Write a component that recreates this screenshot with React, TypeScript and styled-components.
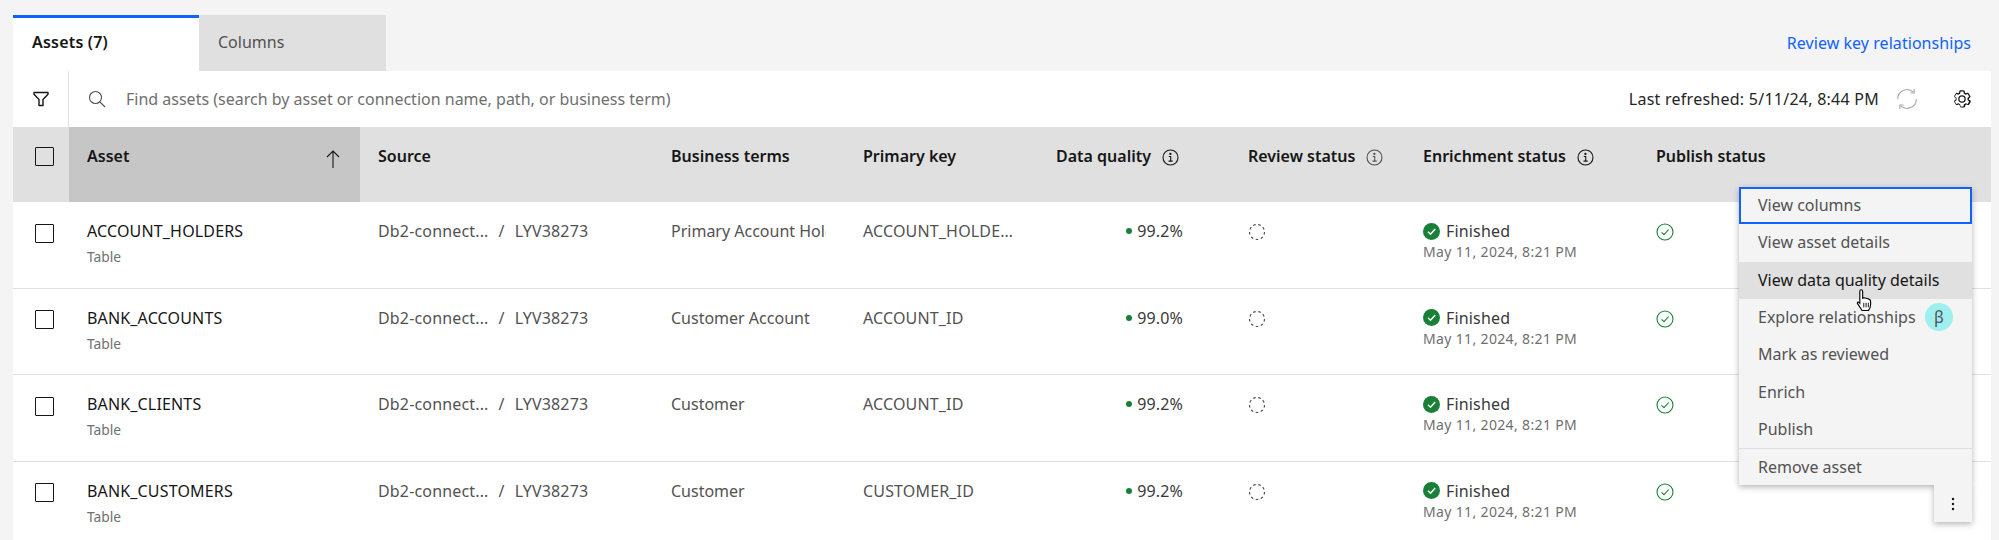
import React from 'react';
import styled, { createGlobalStyle } from 'styled-components';

const COLUMNS = '56px 291px 293px 192px 193px 192px 175px 233px 1fr';

const GlobalStyle = createGlobalStyle`
  html, body {
    margin: 0;
    padding: 0;
    background: #f4f4f4;
    overflow: hidden;
  }

  body {
    font-family: "Noto Sans", "Liberation Sans", sans-serif;
    font-size: 16px;
    color: #161616;
  }
`;

const Page = styled.div`
  position: relative;
  width: 1999px;
  height: 540px;
  padding: 15px 8px 0 13px;
  box-sizing: border-box;
  overflow: hidden;
`;

const TabBar = styled.div`
  display: flex;
  align-items: stretch;
  height: 56px;
`;

type TabProps = { $active?: boolean };

const Tab = styled.div<TabProps>`
  width: ${props => props.$active ? '186px' : '187px'};
  box-sizing: border-box;
  padding: 0 19px 5px;
  display: flex;
  align-items: center;
  background: ${props => props.$active ? '#fff' : '#e0e0e0'};
  border-top: 3px solid ${props => props.$active ? '#0f62fe' : '#e0e0e0'};
  color: ${props => props.$active ? '#161616' : '#525252'};
  font-weight: ${props => props.$active ? 600 : 400};
  letter-spacing: ${props => props.$active ? '0.2px' : '0'};
`;

const ReviewLink = styled.a`
  margin-left: auto;
  margin-right: 20px;
  align-self: center;
  margin-top: -1px;
  color: #0f62fe;
  letter-spacing: 0.05px;
`;

const Toolbar = styled.div`
  display: flex;
  align-items: center;
  height: 56px;
  background: #fff;
`;

const FilterBox = styled.div`
  width: 56px;
  height: 100%;
  display: flex;
  align-items: center;
  justify-content: center;
  border-right: 1px solid #e0e0e0;
  box-sizing: border-box;
`;

const SearchBox = styled.div`
  flex: 1;
  display: flex;
  align-items: center;
  gap: 20px;
  padding-left: 19px;
  color: #6f6f6f;
`;

const Refreshed = styled.span`
  color: #262626;
  margin-right: 17px;
  letter-spacing: 0.25px;
`;

const ToolIcon = styled.span<{ $right: number }>`
  display: flex;
  margin-right: ${props => props.$right}px;
`;

const Row = styled.div`
  display: grid;
  grid-template-columns: ${COLUMNS};
  height: 86.5px;
  background: #fff;
  border-bottom: 1px solid #e0e0e0;
  box-sizing: border-box;
`;

const HeaderRow = styled(Row)`
  height: 75px;
  background: #e0e0e0;
  border-bottom: 0;
`;

const Cell = styled.div`
  padding: 18px 18px 0;
  min-width: 0;
  overflow: hidden;
  white-space: nowrap;
  color: #525252;
  letter-spacing: 0.16px;
`;

const HeadCell = styled.div<{ $sorted?: boolean }>`
  padding: 18px ${props => props.$sorted ? '19px' : '18px'} 0 18px;
  display: flex;
  align-items: flex-start;
  gap: 11px;
  font-weight: 600;
  color: #161616;
  white-space: nowrap;
  background: ${props => props.$sorted ? '#c6c6c6' : 'transparent'};
  justify-content: ${props => props.$sorted ? 'space-between' : 'flex-start'};
`;

const HeadIcon = styled.span`
  display: flex;
  padding-top: 4px;
`;

const CheckCell = styled.div<{ $head?: boolean }>`
  padding: ${props => props.$head ? '20px' : '21.5px'} 0 0 22px;
`;

const Check = styled.span`
  display: block;
  width: 19px;
  height: 19px;
  box-sizing: border-box;
  border: 1.5px solid #161616;
  border-radius: 1px;
`;

const AssetName = styled.div`
  color: #161616;
`;

const TypeText = styled.div`
  font-size: 13.8px;
  color: #6f6f6f;
  margin-top: 5px;
  letter-spacing: 0;
`;

const DateText = styled.div`
  font-size: 14px;
  color: #6f6f6f;
  letter-spacing: 0.35px;
`;

const Ellipsis = styled.div`
  max-width: 150px;
  overflow: hidden;
  text-overflow: ellipsis;
`;

const Clip = styled.div`
  width: 155px;
  overflow: hidden;
  letter-spacing: 0;
`;

const Slash = styled.span`
  margin: 0 10px;
`;

const Quality = styled.div`
  display: flex;
  justify-content: flex-end;
  align-items: center;
  gap: 5px;
  width: 127px;
  color: #393939;
`;

const Dot = styled.span`
  width: 6px;
  height: 6px;
  border-radius: 50%;
  background: #198038;
`;

const IconSlot = styled.div`
  display: flex;
  padding-top: 3px;
`;

const FinishedLine = styled.div`
  display: flex;
  align-items: center;
  gap: 6px;
  color: #393939;
`;

const Menu = styled.ul`
  position: absolute;
  left: 1739px;
  top: 187px;
  width: 233px;
  margin: 0;
  padding: 0;
  list-style: none;
  background: #f4f4f4;
  box-shadow: 0 2px 6px rgba(0, 0, 0, 0.3);
  z-index: 2;
`;

type MenuItemProps = { $focused?: boolean; $hover?: boolean; $divider?: boolean };

const MenuItem = styled.li<MenuItemProps>`
  height: 37.3px;
  box-sizing: border-box;
  padding: 0 19px 1px;
  display: flex;
  align-items: center;
  justify-content: space-between;
  color: ${props => props.$hover ? '#161616' : '#525252'};
  background: ${props => props.$hover ? '#e0e0e0' : 'transparent'};
  outline: ${props => props.$focused ? '2px solid #0f62fe' : 'none'};
  outline-offset: -2px;
  border-top: ${props => props.$divider ? '1px solid #e0e0e0' : '0'};
`;

const Beta = styled.span`
  position: absolute;
  right: 19px;
  width: 28px;
  height: 28px;
  border-radius: 50%;
  background: #9ef0f0;
  display: flex;
  align-items: center;
  justify-content: center;
  color: #525252;
  font-size: 16px;
`;

const MenuTrigger = styled.div`
  position: absolute;
  left: 1934px;
  top: 485px;
  width: 38px;
  height: 37px;
  background: #f4f4f4;
  box-shadow: 0 2px 6px rgba(0, 0, 0, 0.3);
  clip-path: inset(0 -10px -10px -10px);
  display: flex;
  align-items: center;
  justify-content: center;
  z-index: 2;
`;

const Cursor = styled.svg`
  position: absolute;
  left: 1855px;
  top: 288px;
  z-index: 3;
`;

const FilterIcon = () => (
  <svg width="18" height="18" viewBox="0 0 18 18" fill="none" stroke="#161616" strokeWidth="1.4">
    <path d="M2 2.500h14v1.800l-5 5.200v6H7v-6L2 4.300z" strokeLinejoin="round" />
  </svg>
);

const SearchIcon = () => (
  <svg width="18" height="18" viewBox="0 0 18 18" fill="none" stroke="#525252" strokeWidth="1.1">
    <circle cx="7.500" cy="7.500" r="6" />
    <path d="M12 12l5 5" />
  </svg>
);

const RefreshIcon = () => (
  <svg width="22" height="22" viewBox="0 0 20 20" fill="none" stroke="#a8a8a8" strokeWidth="1">
    <path d="M1.500 10a8.500 8.500 0 0 1 14.500-6M18.500 10a8.500 8.500 0 0 1-14.500 6" />
    <path d="M16.500 1v3.500H13M3.500 19v-3.500H7" />
  </svg>
);

const GearIcon = () => (
  <svg width="20" height="20" viewBox="0 0 32 32" fill="#161616">
    <path d="M27 16.760V15.250l1.920-1.680A2 2 0 0 0 29.300 11l-2.360-4a2 2 0 0 0-2.370-.900l-2.430.820a11.350 11.350 0 0 0-1.310-.750l-.510-2.520a2 2 0 0 0-2-1.610h-4.680a2 2 0 0 0-2 1.610l-.510 2.520a11.480 11.480 0 0 0-1.320.750l-2.380-.860A2 2 0 0 0 6.790 6a2 2 0 0 0-.700.730L3.750 10.730a2 2 0 0 0 .410 2.510L6 14.970v1.510l-1.880 1.680a2 2 0 0 0-.410 2.570l2.360 4a2 2 0 0 0 2.370.900l2.430-.820c.42.280.860.530 1.310.750l.510 2.520a2 2 0 0 0 2 1.610H19a2 2 0 0 0 2-1.610l.510-2.520c.45-.220.890-.470 1.320-.750l2.420.820a2 2 0 0 0 2.370-.900l2.280-4a2 2 0 0 0-.410-2.510zM25.120 24.060l-3.430-1.160a8.860 8.860 0 0 1-2.710 1.570L18.270 28H13.730l-.710-3.490a9.360 9.360 0 0 1-2.700-1.570l-3.440 1.120-2.270-4 2.720-2.400a8.900 8.900 0 0 1 0-3.130L4.610 12.060l2.270-4 3.430 1.160A8.860 8.860 0 0 1 13.020 7.650L13.730 4h4.540l.710 3.490a9.360 9.360 0 0 1 2.700 1.570l3.440-1.120 2.270 4-2.720 2.400a8.900 8.900 0 0 1 0 3.130l2.720 2.470z" />
    <path d="M16 22a6 6 0 1 1 6-6 5.940 5.940 0 0 1-6 6zm0-10a3.910 3.910 0 0 0-4 4 3.910 3.910 0 0 0 4 4 3.910 3.910 0 0 0 4-4 3.910 3.910 0 0 0-4-4z" />
  </svg>
);

const SortArrow = () => (
  <svg width="16" height="20" viewBox="0 0 16 20" fill="none" stroke="#161616" strokeWidth="1.1">
    <path d="M8 2v17M2 8l6-6 6 6" />
  </svg>
);

const InfoIcon = ({ color = '#161616' }: { color?: string }) => (
  <svg width="17" height="17" viewBox="0 0 17 17" fill="none" stroke={color} strokeWidth="1.1">
    <circle cx="8.500" cy="8.500" r="7.500" />
    <path d="M6.800 7.500h1.900v4.500M6.500 12.100h4.200" />
    <circle cx="8.400" cy="4.900" r=".6" fill={color} />
  </svg>
);

const PendingIcon = () => (
  <svg width="18" height="18" viewBox="0 0 18 18" fill="none" stroke="#525252" strokeWidth="1.2">
    <circle cx="9" cy="9" r="7.500" strokeDasharray="2.600 2.600" />
  </svg>
);

const FilledCheck = () => (
  <svg width="17" height="17" viewBox="0 0 17 17">
    <circle cx="8.500" cy="8.500" r="8.500" fill="#198038" />
    <path d="M5 8.800l2.500 2.400L12.200 6" fill="none" stroke="#fff" strokeWidth="1.500" />
  </svg>
);

const OutlineCheck = () => (
  <svg width="18" height="18" viewBox="0 0 18 18" fill="none" stroke="#198038" strokeWidth="1.100">
    <circle cx="9" cy="9" r="8" />
    <path d="M5.500 9.300l2.500 2.400 4.700-5.200" />
  </svg>
);

const KebabIcon = () => (
  <svg width="4" height="14" viewBox="0 0 4 14" fill="#161616">
    <circle cx="2" cy="2" r="1.200" />
    <circle cx="2" cy="7" r="1.200" />
    <circle cx="2" cy="12" r="1.200" />
  </svg>
);

const rows = [
  { name: 'ACCOUNT_HOLDERS', term: 'Primary Account Holder', key: 'ACCOUNT_HOLDER_ID', quality: '99.2%' },
  { name: 'BANK_ACCOUNTS', term: 'Customer Account', key: 'ACCOUNT_ID', quality: '99.0%' },
  { name: 'BANK_CLIENTS', term: 'Customer', key: 'ACCOUNT_ID', quality: '99.2%' },
  { name: 'BANK_CUSTOMERS', term: 'Customer', key: 'CUSTOMER_ID', quality: '99.2%' },
];

const menuItems = ['View columns', 'View asset details', 'View data quality details', 'Explore relationships', 'Mark as reviewed', 'Enrich', 'Publish', 'Remove asset'];

const App = () => (
  <Page>
    <GlobalStyle />
    <TabBar>
      <Tab $active>Assets (7)</Tab>
      <Tab>Columns</Tab>
      <ReviewLink>Review key relationships</ReviewLink>
    </TabBar>
    <Toolbar>
      <FilterBox><FilterIcon /></FilterBox>
      <SearchBox>
        <SearchIcon />
        Find assets (search by asset or connection name, path, or business term)
      </SearchBox>
      <Refreshed>Last refreshed: 5/11/24, 8:44 PM</Refreshed>
      <ToolIcon $right={34}><RefreshIcon /></ToolIcon>
      <ToolIcon $right={19}><GearIcon /></ToolIcon>
    </Toolbar>
    <HeaderRow>
      <CheckCell $head><Check /></CheckCell>
      <HeadCell $sorted>Asset <HeadIcon><SortArrow /></HeadIcon></HeadCell>
      <HeadCell>Source</HeadCell>
      <HeadCell>Business terms</HeadCell>
      <HeadCell>Primary key</HeadCell>
      <HeadCell>Data quality <HeadIcon><InfoIcon /></HeadIcon></HeadCell>
      <HeadCell>Review status <HeadIcon><InfoIcon color="#525252" /></HeadIcon></HeadCell>
      <HeadCell>Enrichment status <HeadIcon><InfoIcon /></HeadIcon></HeadCell>
      <HeadCell>Publish status</HeadCell>
    </HeaderRow>
    {rows.map(r => (
      <Row key={r.name}>
        <CheckCell><Check /></CheckCell>
        <Cell>
          <AssetName>{r.name}</AssetName>
          <TypeText>Table</TypeText>
        </Cell>
        <Cell>Db2-connect...<Slash>/</Slash>LYV38273</Cell>
        <Cell><Clip>{r.term}</Clip></Cell>
        <Cell><Ellipsis>{r.key}</Ellipsis></Cell>
        <Cell><Quality><Dot />{r.quality}</Quality></Cell>
        <Cell><IconSlot><PendingIcon /></IconSlot></Cell>
        <Cell>
          <FinishedLine><FilledCheck />Finished</FinishedLine>
          <DateText>May 11, 2024, 8:21 PM</DateText>
        </Cell>
        <Cell><IconSlot><OutlineCheck /></IconSlot></Cell>
        <div />
      </Row>
    ))}
    <Menu>
      {menuItems.map((m, i) => (
        <MenuItem key={m} $focused={i === 0} $hover={i === 2} $divider={i === 7}>
          {m}
          {i === 3 && <Beta>β</Beta>}
        </MenuItem>
      ))}
    </Menu>
    <MenuTrigger><KebabIcon /></MenuTrigger>
    <Cursor width="21" height="25" viewBox="0 0 18 22">
      <path d="M5 1.500c1 0 1.500.6 1.500 1.500v6l1-.3 1 .1 1 .2 1 .3 1.500.5c1.200.4 1.500 1 1.500 2v3c0 2-1 4-2 5H6l-4-6c-.6-1 .4-2 1.500-1l.5.6V3c0-1 .4-1.500 1-1.500z" fill="#fff" stroke="#000" strokeWidth="1" />
      <path d="M7.500 13v4M9.500 13v4M11.500 13v4" stroke="#000" strokeWidth=".8" />
    </Cursor>
  </Page>
);

export default App;
